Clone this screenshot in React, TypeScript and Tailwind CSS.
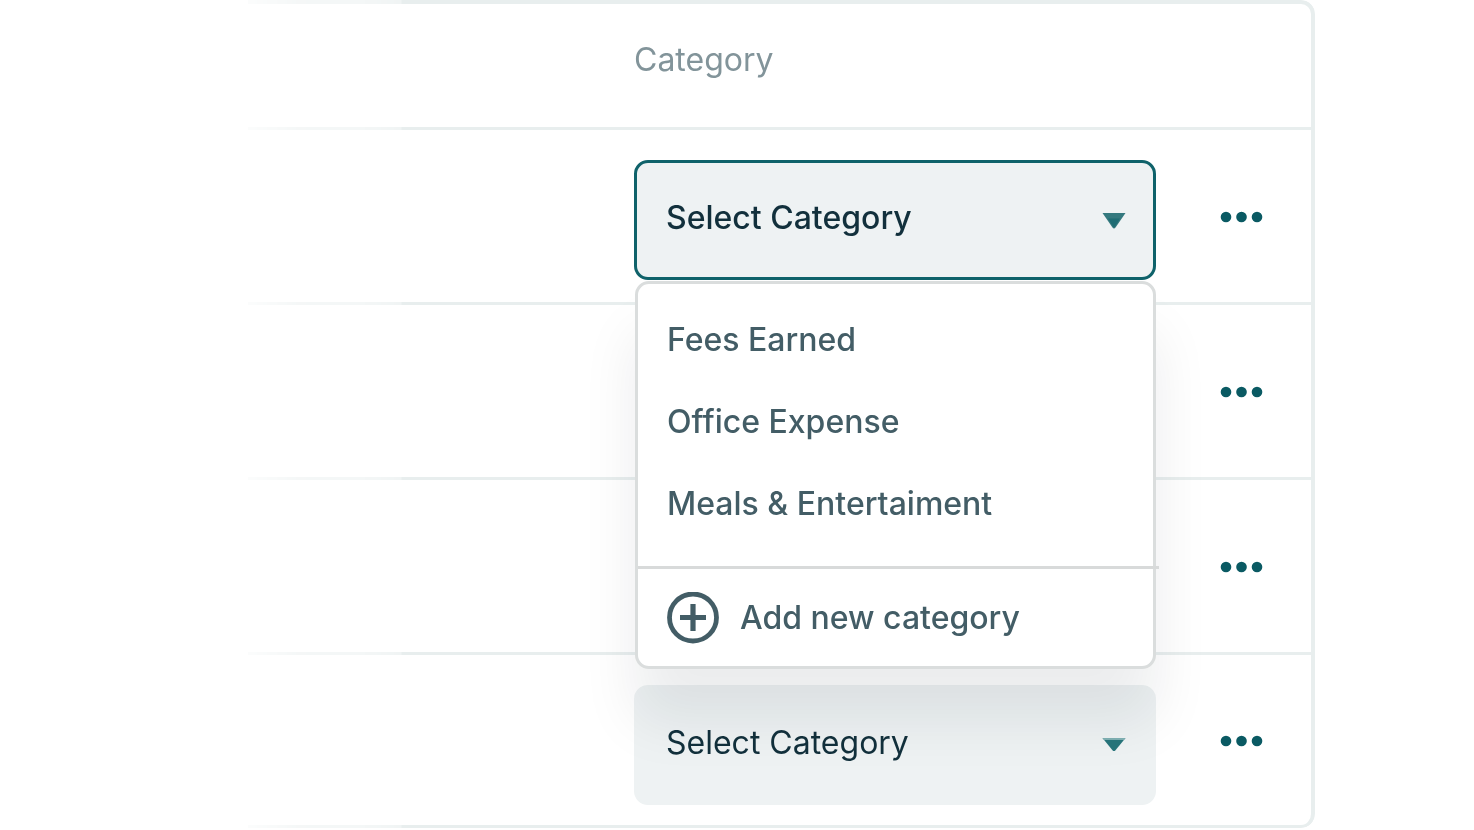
import { useState } from "react";

const categories = ["Fees Earned", "Office Expense", "Meals & Entertaiment"];

function Caret({ active }: { active?: boolean }) {
  return (
    <svg
      aria-hidden="true"
      viewBox="0 0 24 16"
      className="pointer-events-none absolute top-[53px] right-[30px] h-4 w-6"
    >
      {active ? (
        <>
          <path d="M0.5 0H23.5L13.5 14.5Q12 16.4 10.5 14.5Z" fill="#34797e" />
          <path d="M6 5.5H18L13 13.5Q12 14.8 11 13.5Z" fill="#0f656c" opacity="0.55" />
        </>
      ) : (
        <>
          <path d="M0.5 0H23.5L13.3 12.4Q12 13.6 10.7 12.4Z" fill="#27757b" />
          <path d="M0.5 0H23.5L22 2H2Z" fill="#7fb0b3" />
        </>
      )}
    </svg>
  );
}

function Dots() {
  return (
    <svg aria-hidden="true" viewBox="0 0 43 12" className="block h-3 w-[43px]" fill="#0a5a63">
      <circle cx="6" cy="6" r="5.3" />
      <circle cx="21.5" cy="6" r="5.3" />
      <circle cx="37" cy="6" r="5.3" />
    </svg>
  );
}

function CirclePlus() {
  return (
    <svg
      aria-hidden="true"
      viewBox="0 0 52 52"
      className="h-[52px] w-[52px] shrink-0"
      fill="none"
      stroke="#435d66"
    >
      <circle cx="26" cy="25.5" r="23.5" strokeWidth="4.8" />
      <path d="M13 25.5H39M26 12V39" strokeWidth="5.2" />
    </svg>
  );
}

function CategorySelect({ id, active }: { id: string; active?: boolean }) {
  const [value, setValue] = useState("");
  return (
    <>
      <select
        id={id}
        aria-labelledby="category-heading"
        value={value}
        onChange={(e) => setValue(e.target.value)}
        className={
          active
            ? "block h-[120px] w-full appearance-none rounded-[14px] border-3 border-[#0f626a] bg-[#eef2f3] pr-16 pb-1 pl-[29px] font-medium text-[#12303c] outline-none"
            : "block h-[120px] w-full appearance-none rounded-[14px] border-3 border-[#eef2f3] bg-[#eef2f3] pr-16 pb-1 pl-[29px] text-[#12303c] outline-none"
        }
      >
        <option value="">Select Category</option>
        {categories.map((c) => (
          <option key={c}>{c}</option>
        ))}
      </select>
      <Caret active={active} />
    </>
  );
}

function CategoryMenu() {
  return (
    <div className="absolute top-[121px] right-0 left-px z-10 rounded-[14px] border-3 border-[#dadddd] bg-white text-[#435d66] shadow-[0_52px_56px_rgba(0,30,35,0.08)]">
      <ul className="pt-[15px] pb-[21px]">
        {categories.map((c) => (
          <li key={c}>
            <button type="button" className="block h-[82px] w-full pl-[29px] text-left font-medium">
              {c}
            </button>
          </li>
        ))}
      </ul>
      <hr className="-mr-1.5 border-t-3 border-[#d8dada]" />
      <button type="button" className="flex h-[97px] w-full items-center gap-[21px] pl-[29px] font-medium">
        <CirclePlus />
        Add new category
      </button>
    </div>
  );
}

const rows = [
  { id: "row-1", kind: "open" },
  { id: "row-2", kind: "covered" },
  { id: "row-3", kind: "covered" },
  { id: "row-4", kind: "closed" },
];

export default function App() {
  return (
    <main className="bg-white pr-[159px] pl-[248px] font-['Inter',sans-serif] text-[32px] leading-10">
      <div className="overflow-hidden rounded-r-[14px] border-t-4 border-r-4 border-b-3 border-[#e8eeee] mask-[linear-gradient(to_right,rgba(0,0,0,0.15),rgba(0,0,0,0.45)_50px,rgba(0,0,0,0.5)_120px,rgba(0,0,0,0.65)_153px,black_154px)]">
        <table className="w-full table-fixed border-separate border-spacing-0">
          <colgroup>
            <col />
            <col className="w-[522px]" />
            <col className="w-[155px]" />
          </colgroup>
          <thead>
            <tr className="h-[126px]">
              <td className="border-b-3 border-[#e8eeee]" />
              <th
                id="category-heading"
                scope="col"
                className="border-b-3 border-[#e8eeee] p-0 pb-3 text-left font-normal text-[#82949a]"
              >
                Category
              </th>
              <td className="border-b-3 border-[#e8eeee]" />
            </tr>
          </thead>
          <tbody className="[&>tr:last-child]:h-[170px] [&>tr:last-child>td]:border-b-0">
            {rows.map((row) => (
              <tr key={row.id} className="h-[175px]">
                <td className="border-b-3 border-[#e8eeee] p-0" />
                <td className="border-b-3 border-[#e8eeee] p-0 pt-[30px] align-top">
                  {row.kind !== "covered" && (
                    <div className="relative">
                      <CategorySelect id={row.id} active={row.kind === "open"} />
                      {row.kind === "open" && <CategoryMenu />}
                    </div>
                  )}
                </td>
                <td className="border-b-3 border-[#e8eeee] p-0 pt-0.5 pr-12">
                  <button type="button" aria-label="More actions" className="ml-auto block py-3">
                    <Dots />
                  </button>
                </td>
              </tr>
            ))}
          </tbody>
        </table>
      </div>
    </main>
  );
}
